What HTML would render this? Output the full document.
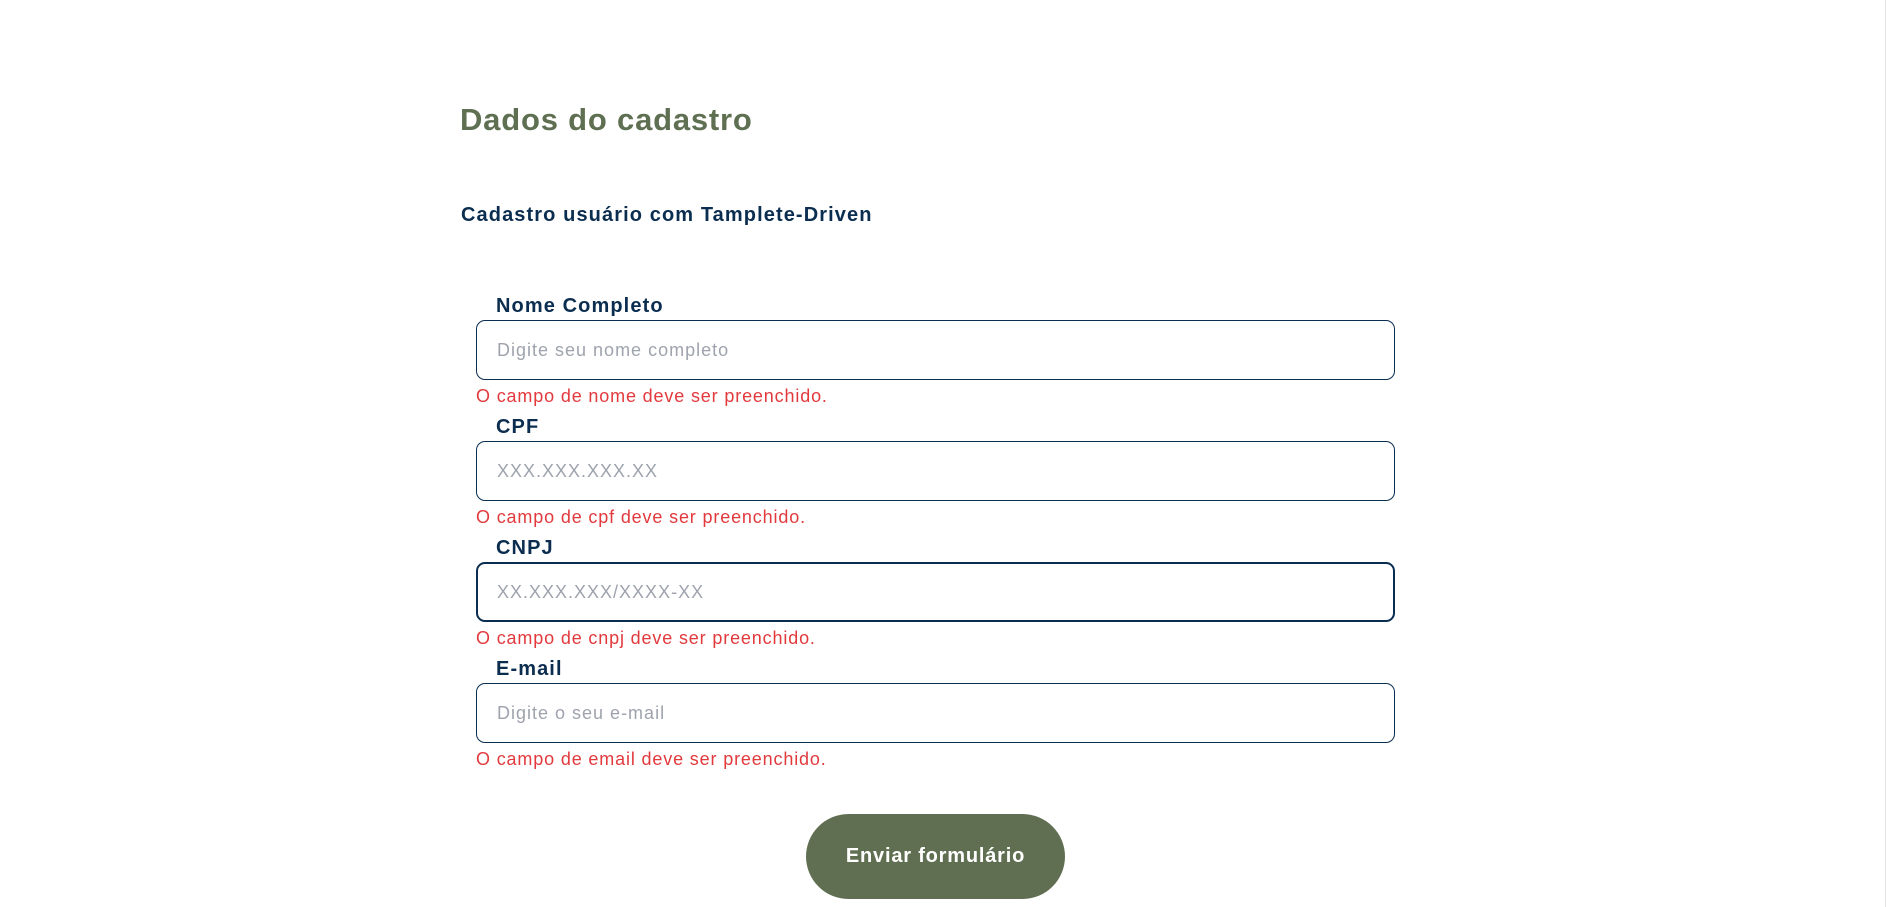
<!DOCTYPE html>
<html><head><meta charset="utf-8"><style>
html,body{margin:0;padding:0;background:#fff;width:1886px;height:907px;overflow:hidden;font-family:"Liberation Sans",sans-serif;position:relative}
.a{position:absolute;white-space:nowrap}
h1{position:absolute;left:460px;top:100px;margin:0;font-size:31px;line-height:40px;font-weight:bold;color:#5f6f52;letter-spacing:0.8px}
.sub{left:461px;top:203px;font-size:20px;line-height:24px;font-weight:bold;color:#0b2d4f;letter-spacing:1.1px}
.lab{left:496px;font-size:20px;line-height:24px;font-weight:bold;color:#0b2d4f;letter-spacing:1.1px}
.inp{position:absolute;left:476px;width:917px;height:58px;border:1px solid #0a2d52;border-radius:9px;box-sizing:content-box}
.inp.f{border:2px solid #0a2d52;width:915px;height:56px}
.ph{position:absolute;left:20px;top:0;line-height:58px;font-size:18px;color:#9ea3ad;letter-spacing:1px;white-space:nowrap}
.err{left:476px;font-size:18px;line-height:22px;color:#e2393d;letter-spacing:0.85px}
.btn{position:absolute;left:806px;top:814px;width:259px;height:85px;border-radius:43px;background:#606f51;color:#fff;font-weight:bold;font-size:20px;line-height:85px;text-align:center;letter-spacing:0.8px}
.sb{position:absolute;right:0;top:0;width:1px;height:907px;background:#e4e4e4}
</style></head><body>
<h1>Dados do cadastro</h1>
<div class="a sub">Cadastro usuário com Tamplete-Driven</div>

<div class="a lab" style="top:294px">Nome Completo</div>
<div class="inp" style="top:320px"><span class="ph">Digite seu nome completo</span></div>
<div class="a err" style="top:385px">O campo de nome deve ser preenchido.</div>

<div class="a lab" style="top:415px">CPF</div>
<div class="inp" style="top:441px"><span class="ph">XXX.XXX.XXX.XX</span></div>
<div class="a err" style="top:506px">O campo de cpf deve ser preenchido.</div>

<div class="a lab" style="top:536px">CNPJ</div>
<div class="inp f" style="top:562px"><span class="ph" style="left:19px;line-height:56px">XX.XXX.XXX/XXXX-XX</span></div>
<div class="a err" style="top:627px">O campo de cnpj deve ser preenchido.</div>

<div class="a lab" style="top:657px">E-mail</div>
<div class="inp" style="top:683px"><span class="ph">Digite o seu e-mail</span></div>
<div class="a err" style="top:748px">O campo de email deve ser preenchido.</div>

<div class="btn">Enviar formulário</div>
<div class="sb"></div>
</body></html>
